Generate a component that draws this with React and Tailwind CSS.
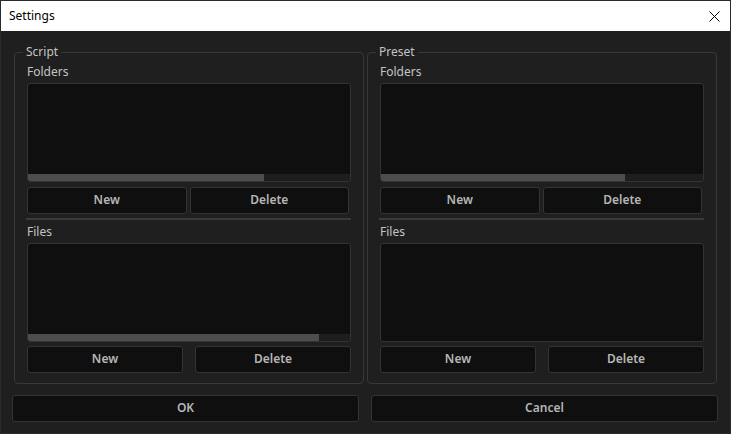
import React from "react";

const FONT = { fontFamily: '"Noto Sans", "Open Sans", "Liberation Sans", sans-serif' };

// thumb width in px, null = no horizontal scrollbar
function ListBox({ thumb }) {
  return (
    <div className="h-[99px] flex flex-col justify-end rounded-[3px] border border-[#333333] bg-[#0f0f0f] overflow-hidden">
      {thumb != null && (
        <div className="h-[7px] bg-[#1e1e1e] flex">
          <div className="h-full bg-[#4d4d4d]" style={{ width: thumb }} />
        </div>
      )}
    </div>
  );
}

function Btn({ children }) {
  return (
    <button className="h-[27px] pb-[2px] rounded-[3px] border border-[#333333] bg-[#0f0f0f] text-[12px] font-semibold text-[#b6b6b6] leading-none">
      {children}
    </button>
  );
}

function Group({ title, folderThumb, fileThumb }) {
  return (
    <fieldset className="w-[350px] rounded-[4px] border border-[#383838]">
      <legend className="ml-[8px] px-[3px] text-[12px] leading-[14px] text-[#c4c4c4]">
        {title}
      </legend>
      <div className="flex flex-col px-[12px] pb-[10px]">
        <div className="mt-[5px] h-[16px] text-[12px] leading-[16px] text-[#c4c4c4]">Folders</div>
        <div className="mt-[3px]">
          <ListBox thumb={folderThumb} />
        </div>
        <div className="mt-[5px] grid grid-cols-2 gap-[3px] pr-[2px]">
          <Btn>New</Btn>
          <Btn>Delete</Btn>
        </div>
        <div className="mt-[4px] -ml-[1px] h-[2px] bg-[#3a3a3a]" />
        <div className="mt-[4px] h-[16px] text-[12px] leading-[16px] text-[#c4c4c4]">Files</div>
        <div className="mt-[3px]">
          <ListBox thumb={fileThumb} />
        </div>
        <div className="mt-[4px] grid grid-cols-2 gap-[12px]">
          <Btn>New</Btn>
          <Btn>Delete</Btn>
        </div>
      </div>
    </fieldset>
  );
}

export default function App() {
  return (
    <div
      className="w-[731px] h-[434px] border border-[#2b2b2b] bg-[#1f1f1f] flex flex-col overflow-hidden"
      style={FONT}
    >
      {/* title bar */}
      <div className="h-[30px] bg-white flex items-center justify-between pl-[8px] pr-[10px]">
        <span className="text-[12px] text-black">Settings</span>
        <svg width="11" height="11" viewBox="0 0 11 11" className="block">
          <path d="M0.5 0.5 L10.5 10.5 M10.5 0.5 L0.5 10.5" stroke="#000" strokeWidth="1" />
        </svg>
      </div>

      <div className="flex flex-col flex-1">
        <div className="flex gap-[3px] pl-[13px] pr-[13px] pt-[14px]">
          <Group title="Script" folderThumb={236} fileThumb={291} />
          <Group title="Preset" folderThumb={244} fileThumb={null} />
        </div>
        <div className="mt-[11px] grid grid-cols-2 gap-[12px] pl-[11px] pr-[12px]">
          <Btn>OK</Btn>
          <Btn>Cancel</Btn>
        </div>
      </div>
    </div>
  );
}
